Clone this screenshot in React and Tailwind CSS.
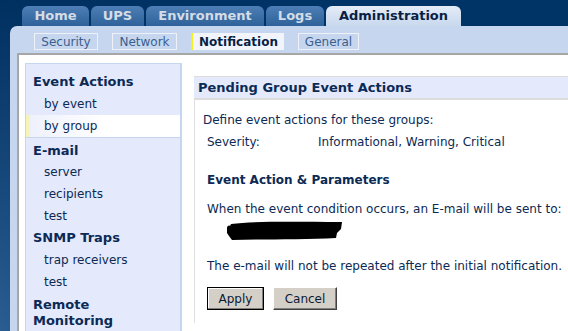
import React from "react";

const font = { fontFamily: '"DejaVu Sans", Verdana, sans-serif' };

function Tab({ label, w, active }) {
  if (active) {
    return (
      <div
        className={`h-[20px] ${w} rounded-t-[6px] bg-gradient-to-b from-[#e4ecf8] to-[#c8d8ee] text-[#0a1f44] font-bold text-[13px] flex items-center justify-center`}
      >
        {label}
      </div>
    );
  }
  return (
    <div
      className={`h-[20px] ${w} rounded-t-[6px] bg-gradient-to-b from-[#4d7fb6] to-[#2f629a] text-[#d4dce6] font-bold text-[13px] flex items-center justify-center`}
    >
      {label}
    </div>
  );
}

function SubTab({ label, w, active }) {
  if (active) {
    return (
      <div className={`h-[17px] ${w} bg-[#f2f4fb] border-l-2 border-[#f5f01e] text-[#0a1f44] font-bold text-[12px] flex items-center justify-center`}>
        {label}
      </div>
    );
  }
  return (
    <div className={`h-[17px] ${w} border border-[#eef2f8] text-[#3a5f8e] text-[12px] flex items-center justify-center`}>
      {label}
    </div>
  );
}

function SideHead({ children, cls }) {
  return <div className={`px-[7px] ${cls} text-[13px] font-bold text-[#0b2a55] leading-[20px]`}>{children}</div>;
}
function SideItem({ children, active }) {
  if (active) {
    return (
      <div className="h-[22px] flex bg-white">
        <div className="w-[4px] bg-[#f4f3b8]" />
        <div className="flex-1 pl-[14px] text-[12px] text-[#0b2a55] leading-[22px] bg-gradient-to-r from-[#eef1fc] via-[#ffffff] to-[#ffffff]">
          {children}
        </div>
      </div>
    );
  }
  return <div className="h-[22px] pl-[18px] text-[12px] text-[#0b2a55] leading-[22px]">{children}</div>;
}

export default function App() {
  return (
    <div style={font} className="w-[568px] h-[331px] overflow-hidden bg-gradient-to-b from-[#003060] to-[#2a5d92] relative">
      <div className="absolute inset-0 bg-gradient-to-r from-transparent via-[#003366] to-[#003366]" />
      <div className="relative h-full flex flex-col">
        <div className="h-[26px] pt-[6px] pl-[22px] flex gap-[2px]">
          <Tab label="Home" w="w-[67px]" />
          <Tab label="UPS" w="w-[53px]" />
          <Tab label="Environment" w="w-[118px]" />
          <Tab label="Logs" w="w-[58px]" />
          <Tab label="Administration" w="w-[135px]" active />
        </div>
        <div className="flex-1 ml-[10px] bg-[#c6d6ee] rounded-tl-[7px] flex flex-col">
          <div className="h-[27px] pt-[7px] pl-[24px] flex gap-[14px]">
            <SubTab label="Security" w="w-[64px]" />
            <SubTab label="Network" w="w-[65px]" />
            <SubTab label="Notification" w="w-[93px]" active />
            <SubTab label="General" w="w-[61px]" />
          </div>
          <div className="flex-1 ml-[7px] border-t-2 border-l-2 border-[#a6a6a6] bg-white flex">
            <div className="ml-[6px] mt-[8px] w-[157px] bg-[#e4e9fb] border-l border-r-2 border-[#c6d6ee] border-t pt-[5px]">
              <SideHead cls="pt-[3px] h-[24px]">Event Actions</SideHead>
              <SideItem>by event</SideItem>
              <SideItem active>by group</SideItem>
              <div className="h-[1px] bg-[#c6d6ee]" />
              <SideHead cls="pt-[3px] h-[23px]">E-mail</SideHead>
              <SideItem>server</SideItem>
              <SideItem>recipients</SideItem>
              <SideItem>test</SideItem>
              <SideHead cls="pt-[1px] h-[22px]">SNMP Traps</SideHead>
              <SideItem>trap receivers</SideItem>
              <SideItem>test</SideItem>
              <div className="px-[7px] pt-[4px] text-[13px] font-bold text-[#0b2a55] leading-[16px]">Remote<br />Monitoring</div>
            </div>
            <div className="ml-[12px] mt-[21px] flex-1 flex flex-col">
              <div className="h-[24px] bg-[#e4e9fb] border-t border-b-2 border-[#dcdcdc] pl-[4px] text-[13px] font-bold text-[#0b2a55] leading-[22px]">
                Pending Group Event Actions
              </div>
              <div className="border-l border-[#e0e0e0] pl-[8px] h-[223px] text-[12px] text-[#0b2a55]">
                <div className="pt-[11px] leading-[18px]">Define event actions for these groups:</div>
                <div className="flex pt-[4px] leading-[18px] pl-[4px]">
                  <div className="w-[111px]">Severity:</div>
                  <div>Informational, Warning, Critical</div>
                </div>
                <div className="pt-[20px] font-bold text-[12px] leading-[18px] pl-[4px]">Event Action &amp; Parameters</div>
                <div className="pt-[11px] leading-[18px] pl-[4px] whitespace-nowrap">When the event condition occurs, an E-mail will be sent to:</div>
                <div className="pl-[21px] pt-[1px] h-[28px]">
                  <svg width="122" height="24" viewBox="0 0 122 24">
                    <path d="M3 9 C3 7 5 6 6 7 L7 5 C30 2 70 3 118 3 L117 10 L113 14 L112 19 C80 21 40 20 8 21 L5 17 L3 14 Z" fill="#000" />
                  </svg>
                </div>
                <div className="pt-[11px] leading-[18px] pl-[4px] whitespace-nowrap">The e-mail will not be repeated after the initial notification.</div>
                <div className="pt-[12px] pl-[4px] flex gap-[9px]">
                  <button className="h-[23px] w-[57px] bg-[#d4d0c8] border border-black shadow-[inset_-1px_-1px_0_#808080,inset_1px_1px_0_#ffffff] text-[12px] text-[#0b1a33]">Apply</button>
                  <button className="h-[23px] w-[64px] bg-[#d4d0c8] border-t border-l border-white border-r border-b border-r-[#404040] border-b-[#404040] shadow-[inset_-1px_-1px_0_#808080] text-[12px] text-[#0b1a33]">Cancel</button>
                </div>
              </div>
            </div>
          </div>
        </div>
      </div>
    </div>
  );
}
